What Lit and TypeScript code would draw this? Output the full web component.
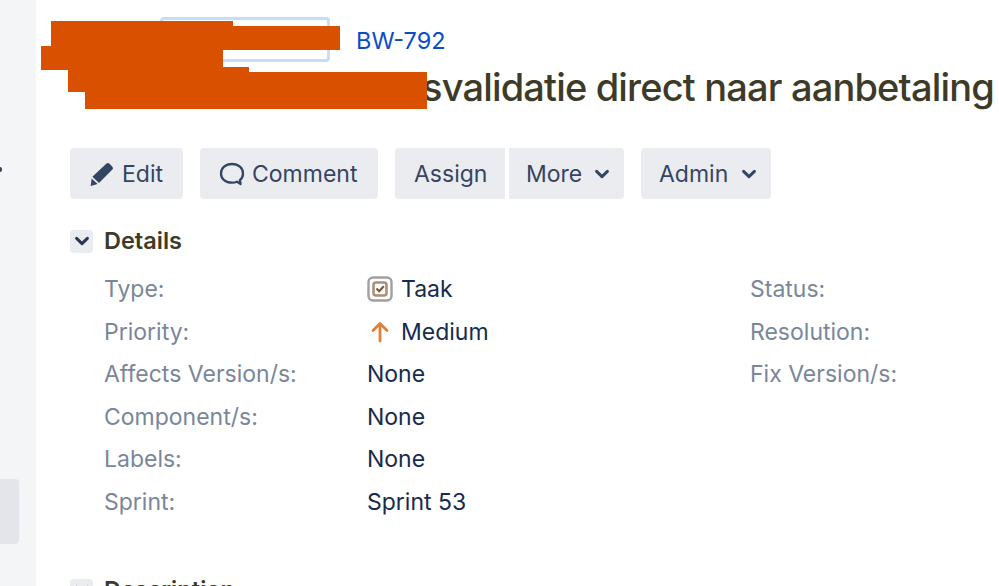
import { LitElement, html, css } from "lit";
import { customElement } from "lit/decorators.js";

const chevron = (w: number) => html`<svg class="chev" width=${w} height=${w} viewBox="0 0 16 16"><path d="M2.6 5.4 8 10.600l5.400-5.200" fill="none" stroke="currentColor" stroke-width="3" stroke-linecap="round" stroke-linejoin="round"/></svg>`;

const rowsLeft: [string, unknown][] = [
  ["Type:", html`<svg class="ic" width="26" height="26" viewBox="0 0 26 26"><rect x="1.500" y="1.500" width="23" height="23" rx="4.500" fill="#fff" stroke="#a0a0a0" stroke-width="2.400"/><rect x="6.500" y="6.500" width="13" height="13" rx="2.500" fill="#fff" stroke="#ab8f76" stroke-width="2.600"/><path d="M9.500 12.500l2.700 2.700 4.600-5" fill="none" stroke="#75563c" stroke-width="2.100"/></svg>Taak`],
  ["Priority:", html`<svg class="ic" width="26" height="26" viewBox="0 0 26 26"><path d="M13 22V5M6 11.500 13 4.500l7 7" fill="none" stroke="#df8139" stroke-width="2.800" stroke-linecap="round" stroke-linejoin="round"/></svg>Medium`],
  ["Affects Version/s:", "None"],
  ["Component/s:", "None"],
  ["Labels:", "None"],
  ["Sprint:", "Sprint 53"],
];
const rowsRight = ["Status:", "Resolution:", "Fix Version/s:"];

@customElement("app-root")
export class AppRoot extends LitElement {
  static styles = css`
    :host { display: block; width: 999px; height: 586px; overflow: hidden; position: relative; background: #fff;
      font-family: Inter, "Noto Sans", sans-serif; font-size: 23px; color: #172b4d; }
    .page { display: flex; height: 586px; }
    .side { width: 36px; flex: none; background: #f4f5f7; padding-top: 479px; box-sizing: border-box; }
    .side-item { width: 19px; height: 65px; background: #e3e5ea; border-radius: 0 4px 4px 0; }
    .main { flex: 1; min-width: 0; padding: 17px 0 0 34px; white-space: nowrap; }
    .crumbs { display: flex; align-items: center; height: 45px; padding-left: 90px; gap: 26px; }
    .focus { width: 170px; height: 45px; box-sizing: border-box; border: 3px solid #c5dcfb; border-radius: 4px; }
    .key { color: #0b4cc9; font-size: 23.5px; margin-top: 1px; }
    h1 { margin: 3px 0 0; padding-left: 352px; font-size: 38px; letter-spacing: -0.83px; line-height: 44px; height: 44px; font-weight: 500; color: #3d3b28; }
    .toolbar { display: flex; margin-top: 39px; }
    .btn { height: 51px; display: flex; align-items: center; box-sizing: border-box; background: #ebecf0; color: #344563; border-radius: 4px; padding: 0 19px; gap: 7px; }
    .chev { flex: none; }
    .edit { width: 113px; margin-right: 17px; }
    .comment { width: 178px; margin-right: 17px; }
    .assign { width: 110px; border-radius: 4px 0 0 4px; margin-right: 4px; }
    .more { width: 115px; border-radius: 0 4px 4px 0; margin-right: 17px; padding: 0 0 0 17px; gap: 12px; }
    .admin { width: 130px; padding: 0 0 0 18px; gap: 13px; }
    .head { display: flex; align-items: center; gap: 11px; margin-top: 29px; height: 26px; }
    .tog { width: 23px; height: 23px; flex: none; display: flex; align-items: center; justify-content: center; background: #ebecf0; border-radius: 4px; color: #253858; }
    h2 { margin: 0; font-size: 23.5px; font-weight: 600; color: #3d3b28; line-height: 26px; }
    .grid { display: flex; margin: 14px 0 0 34px; }
    .col1 { display: grid; grid-template-columns: 263px 383px; grid-auto-rows: 42.5px; align-items: center; }
    .col2 { display: grid; grid-auto-rows: 42.5px; align-items: center; align-content: start; }
    .lab { color: #7a869a; }
    .val { display: flex; align-items: center; color: #172b4d; }
    .ic { flex: none; margin-right: 8px; }
    .sec2 { margin-top: 54px; }
    .mask { position: absolute; background: #d95000; }
    .m1 { left: 51px; top: 21px; width: 182px; height: 24px; }
    .m2 { left: 51px; top: 26px; width: 289px; height: 24px; }
    .m3 { left: 41px; top: 46px; width: 182px; height: 24px; }
    .m4 { left: 68px; top: 67px; width: 181px; height: 25px; }
    .m5 { left: 85px; top: 72px; width: 342px; height: 37px; }
    .dot { position: absolute; left: 0; top: 167px; width: 2px; height: 5px; background: #344563; border-radius: 0 2px 2px 0; }
  `;

  render() {
    return html`
      <div class="page">
        <div class="side"><div class="side-item"></div></div>
        <div class="main">
          <div class="crumbs"><div class="focus"></div><span class="key">BW-792</span></div>
          <h1>svalidatie direct naar aanbetaling</h1>
          <div class="toolbar">
            <div class="btn edit"><svg width="26" height="26" viewBox="0 0 26 26"><path d="M17.500 2.600a2 2 0 0 1 2.800 0l3.100 3.100a2 2 0 0 1 0 2.800L10 22l-6.600-6.200L17.500 2.600zM2.600 17.400l6 5.600-6.900 2 .9-7.600z" fill="#344563"/></svg>Edit</div>
            <div class="btn comment"><svg width="26" height="26" viewBox="0 0 26 26"><path d="M13 3C6.600 3 2 7 2 12.400s4.600 9.300 11 9.300c2 0 3.500-.3 5-1l3.600 2.300-.7-3.800c2-1.800 3.100-4.100 3.100-6.800C24 7 19.400 3 13 3z" fill="none" stroke="#344563" stroke-width="2.300" stroke-linejoin="round"/></svg>Comment</div>
            <div class="btn assign">Assign</div>
            <div class="btn more">More ${chevron(16)}</div>
            <div class="btn admin">Admin ${chevron(16)}</div>
          </div>
          <div class="head"><div class="tog">${chevron(16)}</div><h2>Details</h2></div>
          <div class="grid">
            <div class="col1">${rowsLeft.map(([l, v]) => html`<div class="lab">${l}</div><div class="val">${v}</div>`)}</div>
            <div class="col2">${rowsRight.map((l) => html`<div class="lab">${l}</div>`)}</div>
          </div>
          <div class="head sec2"><div class="tog">${chevron(16)}</div><h2>Description</h2></div>
        </div>
      </div>
      <div class="dot"></div>
      <div class="mask m1"></div><div class="mask m2"></div><div class="mask m3"></div><div class="mask m4"></div><div class="mask m5"></div>
    `;
  }
}
